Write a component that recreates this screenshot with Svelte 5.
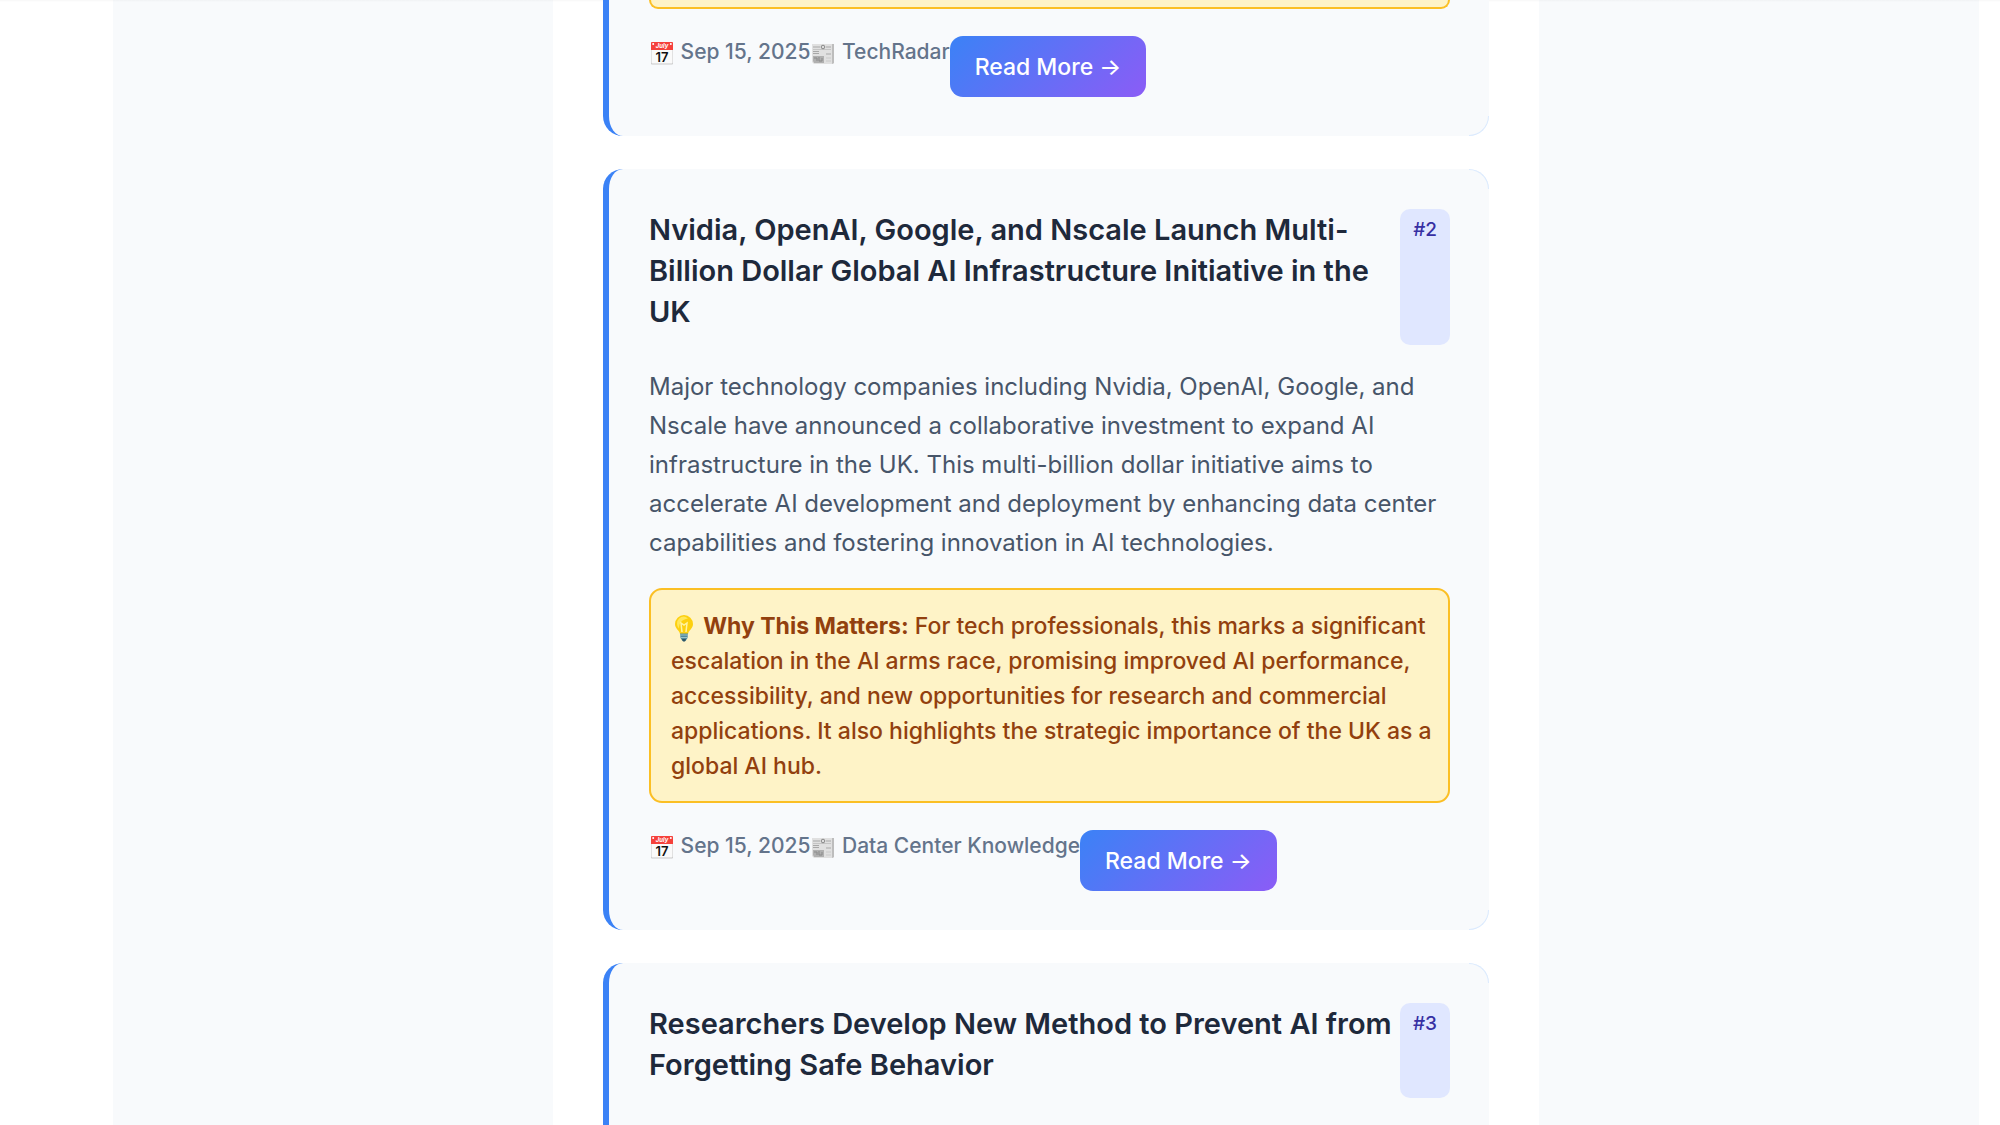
<script>
	const stories = [
		{ date: 'Sep 15, 2025', source: 'TechRadar', part: 'end' },
		{
			rank: 2,
			title: 'Nvidia, OpenAI, Google, and Nscale Launch Multi-Billion Dollar Global AI Infrastructure Initiative in the UK',
			summary: 'Major technology companies including Nvidia, OpenAI, Google, and Nscale have announced a collaborative investment to expand AI infrastructure in the UK. This multi-billion dollar initiative aims to accelerate AI development and deployment by enhancing data center capabilities and fostering innovation in AI technologies.',
			why: 'For tech professionals, this marks a significant escalation in the AI arms race, promising improved AI performance, accessibility, and new opportunities for research and commercial applications. It also highlights the strategic importance of the UK as a global AI hub.',
			date: 'Sep 15, 2025',
			source: 'Data Center Knowledge',
		},
		{
			rank: 3,
			title: 'Researchers Develop New Method to Prevent AI from Forgetting Safe Behavior',
			part: 'start',
		},
	];
</script>

{#snippet calendar()}
	<svg class="emoji" viewBox="0 0 24 24" aria-hidden="true">
		<rect x="1" y="1.5" width="22" height="22" rx="1" fill="#c9c9c9" />
		<rect x="1.5" y="2" width="21" height="20.5" rx="1" fill="#fafafa" />
		<path d="M1 2q0-1 1-1h20q1 0 1 1v7H1z" fill="#f5413b" />
		<circle cx="3.2" cy="3" r="1" fill="#fff" />
		<circle cx="20.8" cy="3" r="1" fill="#fff" />
		<text x="12" y="7" font-size="6" font-style="italic" font-weight="700" fill="#fff" text-anchor="middle">July</text>
		<text x="12" y="21" font-size="13" font-weight="600" fill="#111" text-anchor="middle">17</text>
	</svg>
{/snippet}

{#snippet newspaper()}
	<svg class="emoji" viewBox="0 0 24 24" aria-hidden="true">
		<path d="M1 3h22v19l-1 1H3l-2-2z" fill="#e0e0e0" />
		<path d="M21 3h2v19l-2 1z" fill="#bdbdbd" />
		<path d="M2 6h7M15 6h5M2 10.500h6M2 12.500h6M15 13h5" stroke="#a8a8a8" />
		<path d="M2 8.500h18" stroke="#c4c4c4" />
		<circle cx="12" cy="6" r="1.800" fill="#ddd" stroke="#888" />
		<path d="M2 15h11v7H3l-1-2z" fill="#b0b0b0" />
		<path d="M3 17h3v3M8 16v4h3v-3" stroke="#8a8a8a" fill="none" />
		<path d="M15 17h5M15 20h5" stroke="#cacaca" />
	</svg>
{/snippet}

{#snippet bulb()}
	<svg class="emoji bulb" viewBox="0 0 24 28" aria-hidden="true">
		<path d="M12 1a9 9 0 0 0-9 9c0 5 4.500 6 5 10h8c.5-4 5-5 5-10a9 9 0 0 0-9-9z" fill="#fdd00f" />
		<path d="M12 2.500a7 7 0 0 0-7 7c0 2 1 4 2 5 0-6 3-9 9-10a7 7 0 0 0-4-2z" fill="#ffe75a" />
		<path d="M10 18 9 9l3 2 3-2-1 9" fill="none" stroke="#fff3a3" stroke-width="1.500" />
		<path d="M8 19.500h8l-.5 4.500-2 3h-3l-2-3z" fill="#51899b" />
		<path d="M8 21h8M8.500 23.500h7" stroke="#9bc3c8" />
		<path d="M10 25h4l-1 2.500h-2z" fill="#2d5666" />
	</svg>
{/snippet}

<div class="page">
	<div class="topline"></div>
	<div class="backdrop">
		<main class="newsletter">
			{#each stories as story}
				<article class="story {story.part ?? ''}">
					{#if story.title}
						<header class="heading">
							<h3>{story.title}</h3>
							<span class="rank">#{story.rank}</span>
						</header>
					{/if}
					{#if story.summary}
						<p class="summary">{story.summary}</p>
					{/if}
					{#if story.part !== 'start'}
						<div class="why">
							{#if story.why}
								{@render bulb()} <strong>Why This Matters:</strong> {story.why}
							{/if}
						</div>
						<footer class="meta">
							<span>{@render calendar()} {story.date}</span>
							<span>{@render newspaper()} {story.source}</span>
							<a class="read-more" href="#story">Read More →</a>
						</footer>
					{/if}
				</article>
			{/each}
		</main>
	</div>
</div>

<style>
	:global(body) {
		background: #fff;
	}

	.page {
		height: 100vh;
		box-sizing: border-box;
		padding: 0 21px 0 113px;
		overflow: hidden;
		position: relative;
		font-family: Inter, "Liberation Sans", sans-serif;
	}

	/* shadow of the bar above the reading pane */
	.topline {
		position: absolute;
		top: 0;
		left: 0;
		right: 0;
		height: 2px;
		background: linear-gradient(rgba(0, 0, 0, 0.03), rgba(0, 0, 0, 0));
	}

	.backdrop {
		height: 100%;
		background: #f8fafc;
	}

	.newsletter {
		display: flex;
		flex-direction: column;
		gap: 33px;
		height: 100%;
		max-width: 986px;
		box-sizing: border-box;
		margin: 0 auto;
		padding: 0 50px;
		background: #fff;
	}

	.story {
		flex: none;
		position: relative;
		padding: 40px 39px 39px 40px;
		border-left: 6px solid #3b82f6;
		border-radius: 20px;
		background: #f8fafc;
	}

	/* faint blue edge on the right-hand corners */
	.story::before,
	.story::after {
		content: "";
		position: absolute;
		right: 0;
		width: 19px;
		height: 19px;
		border-right: 1px solid #dbeafe;
	}

	.story::before {
		top: 0;
		border-top: 1px solid #dbeafe;
		border-top-right-radius: 20px;
	}

	.story::after {
		bottom: 0;
		border-bottom: 1px solid #dbeafe;
		border-bottom-right-radius: 20px;
	}

	.end::before,
	.start::after {
		display: none;
	}

	.story.end {
		padding-top: 0;
		border-top-left-radius: 0;
		border-top-right-radius: 0;
	}

	.story.start {
		flex: 1;
		padding-bottom: 0;
		border-bottom-left-radius: 0;
		border-bottom-right-radius: 0;
	}

	.heading {
		display: flex;
		justify-content: space-between;
		margin-bottom: 22px;
	}

	h3 {
		margin: 0 0 13px;
		color: #1e293b;
		font-size: 29px;
		font-weight: 600;
		line-height: 41px;
	}

	.rank {
		flex: none;
		padding: 6px 13px;
		border-radius: 10px;
		background: #e0e7ff;
		color: #3730a3;
		font-size: 19px;
		font-weight: 500;
		line-height: 30px;
	}

	.summary {
		margin: 0 0 26px;
		color: #475569;
		font-size: 24px;
		line-height: 39px;
	}

	.why {
		margin-bottom: 27px;
		padding: 19px 10px 17px 20px;
		border: 2px solid #fbbf24;
		border-radius: 13px;
		background: #fef3c7;
		color: #92400e;
		font-size: 23px;
		font-weight: 500;
		line-height: 35px;
	}

	.end .why {
		height: 7px;
		padding: 0;
		border-top: 0;
		border-top-left-radius: 0;
		border-top-right-radius: 0;
	}

	.meta {
		display: flex;
		color: #64748b;
		font-size: 21px;
		font-weight: 500;
		line-height: 32px;
	}

	.emoji {
		width: 24px;
		height: 24px;
		margin: 0 1px;
		vertical-align: -6px;
	}

	.bulb {
		width: 26px;
		height: 28px;
		margin: 0;
		vertical-align: -8px;
	}

	.read-more {
		padding: 14px 25px 12px;
		border-radius: 13px;
		background: linear-gradient(135deg, #3b82f6, #8b5cf6);
		color: #fff;
		font-size: 23px;
		font-weight: 500;
		line-height: 35px;
		text-decoration: none;
	}
</style>
